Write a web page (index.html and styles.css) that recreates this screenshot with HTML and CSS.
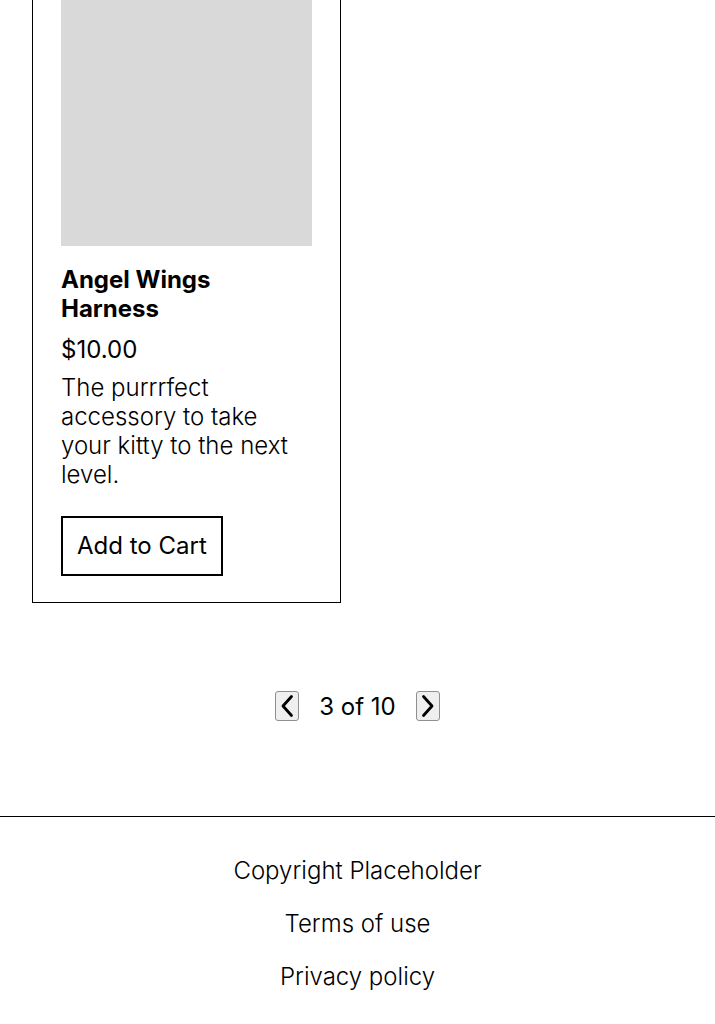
FILE: index.html
```html
<!DOCTYPE html>
<html lang="en">
<head>
<meta charset="utf-8">
<title>Products</title>
<link rel="stylesheet" href="styles.css">
</head>
<body>
<main class="main">
  <div class="grid">
    <article class="card">
      <div class="card-image"></div>
      <h2 class="card-title">Angel Wings Harness</h2>
      <p class="card-price">$10.00</p>
      <p class="card-desc">The purrrfect accessory to take your kitty to the next level.</p>
      <button class="cart-btn" type="button">Add to Cart</button>
    </article>
  </div>
  <nav class="pager">
    <button class="pager-btn" type="button" aria-label="Previous page">
      <svg width="14" height="24" viewBox="0 0 14 24"><path d="M11.5 2.5 L3 12 L11.5 21.5" fill="none" stroke="#000" stroke-width="2.8" stroke-linecap="round" stroke-linejoin="round"/></svg>
    </button>
    <span class="pager-text">3 of 10</span>
    <button class="pager-btn" type="button" aria-label="Next page">
      <svg width="14" height="24" viewBox="0 0 14 24"><path d="M2.5 2.5 L11 12 L2.5 21.5" fill="none" stroke="#000" stroke-width="2.8" stroke-linecap="round" stroke-linejoin="round"/></svg>
    </button>
  </nav>
</main>
<footer class="footer">
  <p class="footer-item">Copyright Placeholder</p>
  <p class="footer-item">Terms of use</p>
  <p class="footer-item">Privacy policy</p>
</footer>
</body>
</html>
```
FILE: styles.css
```css
html, body {
  margin: 0;
  padding: 0;
  background: #fff;
  color: #000;
  font-family: Inter, "Noto Sans", sans-serif;
}

.main {
  padding: 0 32px;
}

.grid {
  display: grid;
  grid-template-columns: 309px 1fr;
  column-gap: 32px;
  margin-top: -83px;
}

.card {
  border: 1px solid #000;
  padding: 28px 28px 26px;
}

.card-image {
  height: 300px;
  background: #d9d9d9;
}

.card-title {
  margin: 19px 0 0;
  font-size: 24px;
  line-height: 29px;
  font-weight: 700;
}

.card-price {
  margin: 12px 0 0;
  font-size: 24px;
  line-height: 29px;
  font-weight: 400;
}

.card-desc {
  margin: 9px 0 0;
  font-family: "Inter Light", Inter, "Noto Sans", sans-serif;
  font-size: 24px;
  line-height: 29px;
  font-weight: 300;
}

.cart-btn {
  margin-top: 27px;
  display: block;
  font-family: inherit;
  font-size: 24px;
  line-height: 30px;
  font-weight: 400;
  color: #000;
  background: #fff;
  border: 2px solid #000;
  border-radius: 0;
  padding: 13px 14px;
}

.pager {
  display: flex;
  justify-content: center;
  align-items: center;
  gap: 20px;
  margin-top: 88px;
  height: 30px;
}

.pager-btn {
  box-sizing: border-box;
  width: 24px;
  height: 30px;
  padding: 0;
  display: flex;
  align-items: center;
  justify-content: center;
  background: #efefef;
  border: 1px solid #8f8f8f;
  border-radius: 3px;
}

.pager-text {
  font-size: 24px;
  line-height: 29px;
  font-weight: 400;
}

.footer {
  margin-top: 95px;
  border-top: 1px solid #000;
  padding-top: 39px;
  display: flex;
  flex-direction: column;
  align-items: center;
  gap: 24px;
}

.footer-item {
  margin: 0;
  font-family: "Inter Light", Inter, "Noto Sans", sans-serif;
  font-size: 24px;
  line-height: 29px;
  font-weight: 300;
}
```
